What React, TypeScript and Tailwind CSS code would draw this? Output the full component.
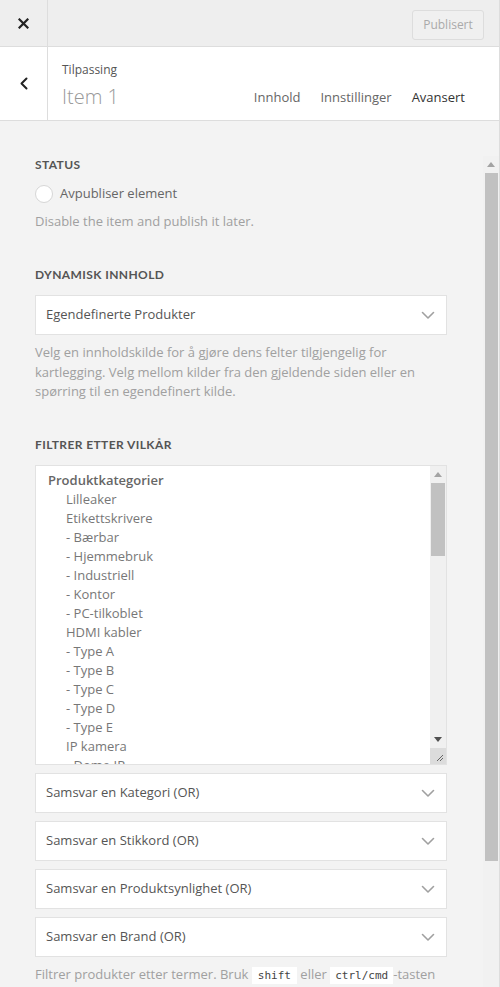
import React from "react";

const subItems = [
  "Lilleaker",
  "Etikettskrivere",
  "- Bærbar",
  "- Hjemmebruk",
  "- Industriell",
  "- Kontor",
  "- PC-tilkoblet",
  "HDMI kabler",
  "- Type A",
  "- Type B",
  "- Type C",
  "- Type D",
  "- Type E",
  "IP kamera",
  "- Dome IP",
];

function Chevron() {
  return (
    <svg width="14" height="14" viewBox="0 0 14 14" fill="none" stroke="#a0a0a0" strokeWidth="1.6" strokeLinecap="round" strokeLinejoin="round" aria-hidden="true">
      <path d="M1.5 4.5 7 10l5.5-5.5" />
    </svg>
  );
}

function Heading({ children }: { children: React.ReactNode }) {
  return (
    <h3 className="text-[12px] leading-4 font-bold uppercase tracking-[0.4px] text-[#555]" style={{ fontFamily: "Lato, 'Open Sans', sans-serif" }}>
      {children}
    </h3>
  );
}

function SelectBox({ label, className = "" }: { label: string; className?: string }) {
  return (
    <div className={`h-[40px] bg-white border border-[#e2e2e2] flex items-center justify-between pl-[10px] pr-[11px] ${className}`}>
      <span className="text-[13px] text-[#555]">{label}</span>
      <Chevron />
    </div>
  );
}

export default function App() {
  return (
    <div className="w-[500px] h-[987px] overflow-hidden bg-[#f3f3f3] border-r border-[#ddd] flex flex-col" style={{ fontFamily: "'Open Sans', sans-serif" }}>
      {/* Top bar */}
      <div className="h-[47px] shrink-0 bg-[#eee] border-b border-[#ddd] flex">
        <button className="w-[48px] border-r border-[#ddd] flex items-center justify-center" aria-label="Lukk">
          <svg width="11" height="11" viewBox="0 0 11 11" stroke="#222" strokeWidth="2.2" strokeLinecap="square" aria-hidden="true">
            <path d="M1.5 1.5l8 8M9.5 1.5l-8 8" />
          </svg>
        </button>
        <div className="flex-1 flex items-center justify-end pr-[15px] pt-[3px]">
          <button className="h-[30px] w-[72px] rounded-[3px] border border-[#ddd] bg-[#f0f0f0] text-[12px] text-[#aaa]">Publisert</button>
        </div>
      </div>

      {/* Title bar */}
      <div className="h-[74px] shrink-0 bg-white border-b border-[#ddd] flex">
        <button className="w-[48px] border-r border-[#ddd] flex items-center justify-center" aria-label="Tilbake">
          <svg width="8" height="13" viewBox="0 0 8 13" fill="none" stroke="#222" strokeWidth="2" strokeLinecap="round" strokeLinejoin="round" aria-hidden="true">
            <path d="M6.5 1.5 1.5 6.5l5 5" />
          </svg>
        </button>
        <div className="flex-1 flex items-end justify-between pl-[14px] pr-[34px] pb-[9px]">
          <div>
            <p className="text-[12px] leading-4 text-[#555]">Tilpassing</p>
            <p className="text-[20px] leading-7 mt-[5px] font-light text-[#999]">Item 1</p>
          </div>
          <nav className="flex gap-[20px] text-[13px] pb-[4px]">
            <span className="text-[#666]">Innhold</span>
            <span className="text-[#666]">Innstillinger</span>
            <span className="text-[#333]">Avansert</span>
          </nav>
        </div>
      </div>

      {/* Body */}
      <div className="flex-1 flex min-h-0">
        <div className="w-[448px] shrink-0 pl-[35px] pr-[1px] pt-[36px]">
          <Heading>Status</Heading>
          <label className="mt-[12px] h-[18px] flex items-center gap-[7px]">
            <span className="w-[18px] h-[18px] rounded-full bg-white border border-[#d6d6d6]" />
            <span className="text-[13px] text-[#666]">Avpubliser element</span>
          </label>
          <p className="mt-[8px] text-[13px] leading-5 text-[#a0a0a0]">Disable the item and publish it later.</p>

          <div className="mt-[36px]">
            <Heading>Dynamisk innhold</Heading>
          </div>
          <SelectBox label="Egendefinerte Produkter" className="mt-[12px]" />
          <p className="mt-[8px] text-[13px] leading-[19.5px] text-[#a0a0a0]">
            Velg en innholdskilde for å gjøre dens felter tilgjengelig for kartlegging. Velg mellom kilder fra den gjeldende siden eller en spørring til en egendefinert kilde.
          </p>

          <div className="mt-[35px]">
            <Heading>Filtrer etter vilkår</Heading>
          </div>

          {/* Multi-select list */}
          <div className="mt-[12px] h-[300px] bg-white border border-[#e2e2e2] flex overflow-hidden">
            <ul className="flex-1 pl-[12px] pt-[5px] text-[13px] leading-[19px] text-[#777]">
              <li className="font-semibold text-[#666]">Produktkategorier</li>
              {subItems.map((it) => (
                <li key={it} className="pl-[18px]">{it}</li>
              ))}
            </ul>
            <div className="w-[16px] bg-[#f0f0f0] flex flex-col">
              <div className="h-[17px] flex items-center justify-center">
                <svg width="8" height="5" viewBox="0 0 8 5" aria-hidden="true"><path d="M0 5 4 0l4 5Z" fill="#a3a3a3" /></svg>
              </div>
              <div className="h-[73px] mx-[1px] bg-[#c1c1c1]" />
              <div className="flex-1" />
              <div className="h-[17px] flex items-center justify-center">
                <svg width="8" height="5" viewBox="0 0 8 5" aria-hidden="true"><path d="M0 0h8L4 5Z" fill="#505050" /></svg>
              </div>
              <div className="h-[16px] bg-[#dcdcdc] flex items-end justify-end p-[2px]">
                <svg width="10" height="10" viewBox="0 0 10 10" stroke="#666" strokeWidth="1" aria-hidden="true">
                  <path d="M9 3 3 9M9 6 6 9" />
                </svg>
              </div>
            </div>
          </div>

          <div className="mt-[8px] flex flex-col gap-[8px]">
            <SelectBox label="Samsvar en Kategori (OR)" />
            <SelectBox label="Samsvar en Stikkord (OR)" />
            <SelectBox label="Samsvar en Produktsynlighet (OR)" />
            <SelectBox label="Samsvar en Brand (OR)" />
          </div>

          <p className="mt-[7px] text-[13px] leading-5 text-[#a0a0a0] whitespace-nowrap">
            Filtrer produkter etter termer. Bruk{" "}
            <code className="bg-white px-[6px] py-[2px] text-[11px] text-[#444]" style={{ fontFamily: "'DejaVu Sans Mono', monospace" }}>shift</code>{" "}
            eller{" "}
            <code className="bg-white px-[5px] py-[2px] text-[11px] text-[#444]" style={{ fontFamily: "'DejaVu Sans Mono', monospace" }}>ctrl/cmd</code>
            -tasten
          </p>
        </div>

        {/* Outer scrollbar */}
        <div className="flex-1 flex justify-end">
          <div className="w-[16px] mt-[35px] bg-[#f1f1f1] flex flex-col">
            <div className="h-[17px] flex items-center justify-center">
              <svg width="8" height="5" viewBox="0 0 8 5" aria-hidden="true"><path d="M0 5 4 0l4 5Z" fill="#a3a3a3" /></svg>
            </div>
            <div className="h-[688px] ml-[2px] mr-[1px] bg-[#c1c1c1]" />
          </div>
        </div>
      </div>
    </div>
  );
}
